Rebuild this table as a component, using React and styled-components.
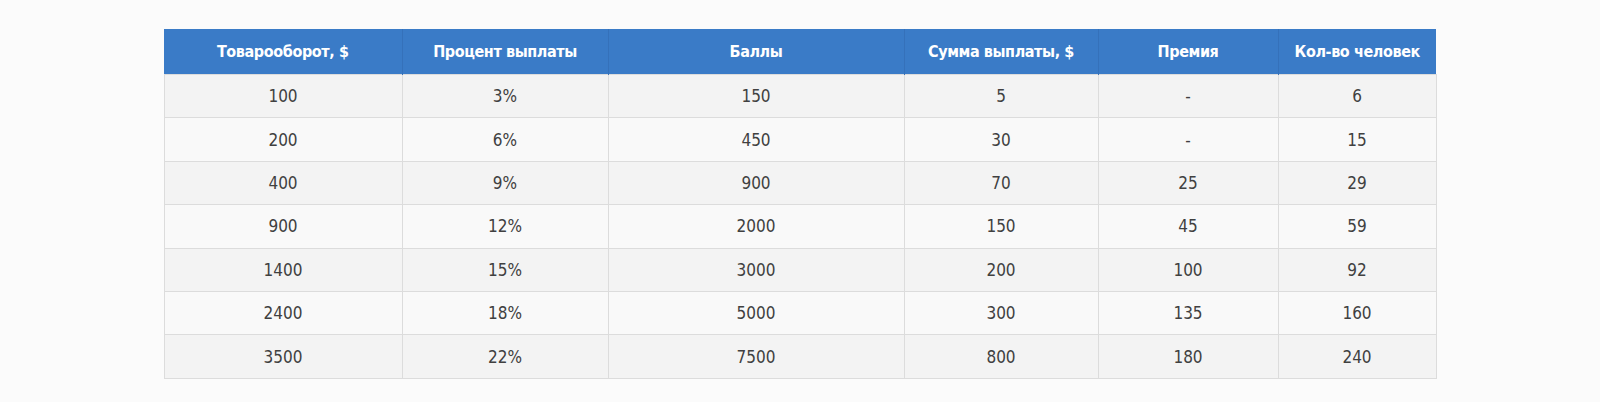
import styled, { createGlobalStyle } from 'styled-components';

const GlobalStyle = createGlobalStyle`
  body {
    margin: 0;
    background: #fbfbfb;
    font-family: "Liberation Sans Narrow", "DejaVu Sans Condensed", "Roboto", sans-serif;
  }
`;

const Page = styled.main`
  padding: 29px 0 24px;
  display: flex;
  justify-content: center;
`;

const Table = styled.table`
  width: 1272px;
  border-collapse: collapse;
  table-layout: fixed;
  font-stretch: condensed;
`;

const Th = styled.th`
  height: 45px;
  padding: 0 6px;
  background-color: #3a7bc7;
  color: #fff;
  font-size: 16px;
  letter-spacing: -0.4px;
  font-weight: 700;
  text-align: center;
  border-left: 1px solid #3571ba;
  &:first-child { border-left: none; }
`;

const Row = styled.tr`
  background-color: ${({ $odd }) => ($odd ? '#f3f3f3' : '#f9f9f9')};
`;

const Td = styled.td`
  height: 42.4px;
  padding: 0 8px;
  text-align: center;
  color: #404040;
  font-size: 17px;
  border: 1px solid #dcdcdc;
`;

const columns = [
  { title: 'Товарооборот, $', width: 238 },
  { title: 'Процент выплаты', width: 206 },
  { title: 'Баллы', width: 296 },
  { title: 'Сумма выплаты, $', width: 194 },
  { title: 'Премия', width: 180 },
  { title: 'Кол-во человек', width: 158 },
];

const rows = [
  ['100', '3%', '150', '5', '-', '6'],
  ['200', '6%', '450', '30', '-', '15'],
  ['400', '9%', '900', '70', '25', '29'],
  ['900', '12%', '2000', '150', '45', '59'],
  ['1400', '15%', '3000', '200', '100', '92'],
  ['2400', '18%', '5000', '300', '135', '160'],
  ['3500', '22%', '7500', '800', '180', '240'],
];

export default function App() {
  return (
    <>
      <GlobalStyle />
      <Page>
        <Table>
          <colgroup>
            { columns.map((c) => <col key={ c.title } style={ { width: c.width } } />) }
          </colgroup>
          <thead>
            <tr>
              { columns.map((c) => <Th key={ c.title }>{ c.title }</Th>) }
            </tr>
          </thead>
          <tbody>
            { rows.map((r, i) => (
              <Row key={ r[0] } $odd={ i % 2 === 0 }>
                { r.map((v, j) => <Td key={ j }>{ v }</Td>) }
              </Row>
            )) }
          </tbody>
        </Table>
      </Page>
    </>
  );
}
